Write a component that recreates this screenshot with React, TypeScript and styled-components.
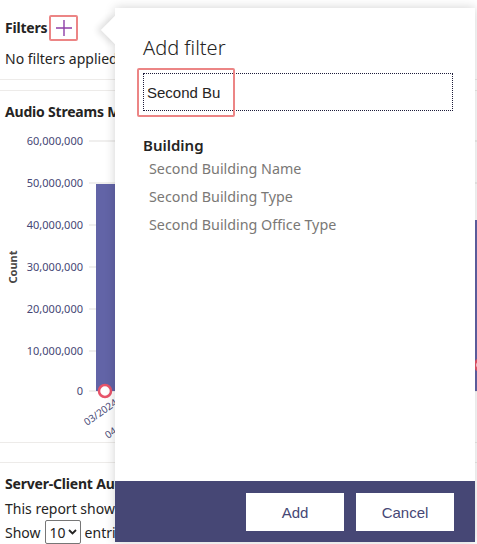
import React, { useState } from 'react'
import styled, { createGlobalStyle } from 'styled-components'

const GlobalStyle = createGlobalStyle`
  html, body {
    margin: 0;
    padding: 0;
    background: #ffffff;
    overflow: hidden;
  }
  body {
    font-family: "Noto Sans", "Liberation Sans", sans-serif;
    color: #252423;
  }
`

const Page = styled.div`
  position: relative;
  width: 477px;
  height: 544px;
  overflow: hidden;
`

const Content = styled.div`
  padding: 0 0 0 5px;
  display: flex;
  flex-direction: column;
`

const FiltersRow = styled.div`
  display: flex;
  align-items: center;
  height: 26px;
  margin-top: 15px;
  gap: 2px;
`

const SectionTitle = styled.div<{ $top?: number }>`
  font-weight: 700;
  font-size: 14px;
  line-height: 20px;
  white-space: nowrap;
  letter-spacing: -0.2px;
  margin-top: ${p => p.$top ?? 0}px;
`

const PlusButton = styled.div`
  position: relative;
  width: 29px;
  height: 26px;
  display: flex;
  align-items: center;
  justify-content: center;
`

const Highlight = styled.div<{ $w: number; $h: number; $l: number; $t: number }>`
  position: absolute;
  left: ${p => p.$l}px;
  top: ${p => p.$t}px;
  width: ${p => p.$w}px;
  height: ${p => p.$h}px;
  border: 2px solid #ec8585;
  border-radius: 2px;
  box-sizing: border-box;
  pointer-events: none;
  z-index: 5;
`

const BodyText = styled.div<{ $top?: number }>`
  font-size: 14px;
  line-height: 20px;
  white-space: nowrap;
  margin-top: ${p => p.$top ?? 0}px;
`

const Divider = styled.div<{ $gap: number }>`
  height: 1px;
  background: #edebe9;
  margin-top: ${p => p.$gap}px;
  margin-left: -5px;
`

const ChartWrap = styled.div`
  margin: 3px 0 0 -5px;
  height: 316px;
`

const ShowRow = styled.div`
  display: flex;
  align-items: center;
  gap: 4px;
  font-size: 14px;
  height: 24px;
  margin-top: 1px;
  white-space: nowrap;
`

const FakeSelect = styled.div`
  display: flex;
  align-items: center;
  gap: 2px;
  height: 22px;
  padding: 0 3px 0 4px;
  border: 1px solid #767676;
  border-radius: 2px;
  font-size: 14px;
  flex-shrink: 0;
`

/* --- add filter flyout --- */

const Flyout = styled.div`
  position: absolute;
  left: 115px;
  top: 8px;
  width: 360px;
  height: 534px;
  background: #ffffff;
  box-shadow: 0 0 10px rgba(0, 0, 0, 0.18);
  display: flex;
  flex-direction: column;
  z-index: 3;
`

const Beak = styled.div`
  position: absolute;
  left: -10px;
  top: 12px;
  width: 20px;
  height: 20px;
  background: #ffffff;
  transform: rotate(45deg);
  box-shadow: -3px 3px 6px rgba(0, 0, 0, 0.12);
`

const FlyoutBody = styled.div`
  position: relative;
  flex: 1;
  padding: 26px 22px 0 28px;
  display: flex;
  flex-direction: column;
  background: #ffffff;
`

const FlyoutTitle = styled.div`
  font-size: 20px;
  line-height: 28px;
  font-weight: 300;
  color: #252423;
`

const SearchInput = styled.input`
  margin-top: 11px;
  width: 310px;
  height: 38px;
  box-sizing: border-box;
  border: 1px dotted #1d1c3a;
  outline: none;
  padding: 0 3px;
  font-family: "Liberation Sans", Arial, sans-serif;
  font-size: 15px;
  color: #252423;
  background: #fff;
`

const GroupLabel = styled.div`
  margin-top: 24px;
  font-size: 15px;
  line-height: 20px;
  font-weight: 600;
  color: #252423;
`

const OptionList = styled.div`
  display: flex;
  flex-direction: column;
`

const Option = styled.div`
  padding-left: 6px;
  font-size: 14.3px;
  line-height: 28px;
  color: #7a7876;
  cursor: pointer;
`

const Footer = styled.div`
  height: 61px;
  background: #464775;
  display: flex;
  justify-content: flex-end;
  align-items: flex-start;
  padding: 12px 21px 0 0;
  box-sizing: border-box;
  gap: 12px;
`

const FooterButton = styled.button`
  width: 98px;
  height: 38px;
  border: none;
  background: #ffffff;
  color: #464775;
  font-family: "Liberation Sans", Arial, sans-serif;
  font-size: 15px;
  cursor: pointer;
`

const yTicks = [
  { v: '60,000,000', y: 141 },
  { v: '50,000,000', y: 183 },
  { v: '40,000,000', y: 225 },
  { v: '30,000,000', y: 267 },
  { v: '20,000,000', y: 309 },
  { v: '10,000,000', y: 351 },
  { v: '0', y: 391 },
]

const Chart = () => {
  const top = 125
  return (
    <svg width="477" height="316" viewBox={`0 ${top} 477 316`} style={{ display: 'block' }}>
      {yTicks.map(t => (
        <g key={t.v}>
          <line x1="89" x2="477" y1={t.y} y2={t.y} stroke="#e1dfdd" strokeWidth="1" />
          <text
            x="83"
            y={t.y + 4}
            textAnchor="end"
            fontSize="11"
            fill="#464775"
            fontFamily='"Noto Sans", sans-serif'
          >
            {t.v}
          </text>
        </g>
      ))}
      <rect x="96" y="184" width="120" height="207" fill="#6264a7" />
      <rect x="475" y="220" width="30" height="171" fill="#6264a7" />
      <circle cx="105" cy="391" r="6" fill="#ffffff" stroke="#e8546a" strokeWidth="2.5" />
      <circle cx="481" cy="365" r="6" fill="#ffffff" stroke="#e8546a" strokeWidth="2.5" />
      <text
        x="17"
        y="267"
        transform="rotate(-90 17 267)"
        textAnchor="middle"
        fontSize="11"
        fontWeight="700"
        fill="#484644"
        fontFamily='"Noto Sans", sans-serif'
      >
        Count
      </text>
      <text
        x="87"
        y="426"
        transform="rotate(-35 87 426)"
        fontSize="10"
        fill="#464775"
        fontFamily='"Noto Sans", sans-serif'
      >
        03/2024
      </text>
      <text
        x="108"
        y="439"
        transform="rotate(-35 108 439)"
        fontSize="10"
        fill="#464775"
        fontFamily='"Noto Sans", sans-serif'
      >
        04
      </text>
    </svg>
  )
}

const PlusIcon = () => (
  <svg width="18" height="18" viewBox="0 0 18 18">
    <path d="M9 1v16M1 9h16" stroke="#8e3fa8" strokeWidth="1.4" fill="none" />
  </svg>
)

const ChevronDown = () => (
  <svg width="9" height="6" viewBox="0 0 9 6">
    <path d="M1 1l3.5 3.5L8 1" stroke="#252423" strokeWidth="1.8" fill="none" />
  </svg>
)

const options = ['Second Building Name', 'Second Building Type', 'Second Building Office Type']

export default function App() {
  const [query, setQuery] = useState('Second Bu')

  return (
    <Page>
      <GlobalStyle />
      <Content>
        <FiltersRow>
          <SectionTitle>Filters</SectionTitle>
          <PlusButton>
            <PlusIcon />
            <Highlight $l={0} $t={0} $w={29} $h={26} />
          </PlusButton>
        </FiltersRow>
        <BodyText $top={8}>No filters applied</BodyText>
        <Divider $gap={10} />
        <Divider $gap={10} />
        <SectionTitle $top={11}>Audio Streams Media</SectionTitle>
        <ChartWrap>
          <Chart />
        </ChartWrap>
        <Divider $gap={1} />
        <Divider $gap={19} />
        <SectionTitle $top={11}>Server-Client Audio</SectionTitle>
        <BodyText $top={5}>This report shows server</BodyText>
        <ShowRow>
          <span>Show</span>
          <FakeSelect>
            <span>10</span>
            <ChevronDown />
          </FakeSelect>
          <span>entries</span>
        </ShowRow>
      </Content>

      <Flyout>
        <Beak />
        <FlyoutBody>
          <FlyoutTitle>Add filter</FlyoutTitle>
          <SearchInput value={query} onChange={e => setQuery(e.target.value)} />
          <Highlight $l={22} $t={60} $w={98} $h={49} />
          <GroupLabel>Building</GroupLabel>
          <OptionList>
            {options.map(o => (
              <Option key={o}>{o}</Option>
            ))}
          </OptionList>
        </FlyoutBody>
        <Footer>
          <FooterButton>Add</FooterButton>
          <FooterButton>Cancel</FooterButton>
        </Footer>
      </Flyout>
    </Page>
  )
}
